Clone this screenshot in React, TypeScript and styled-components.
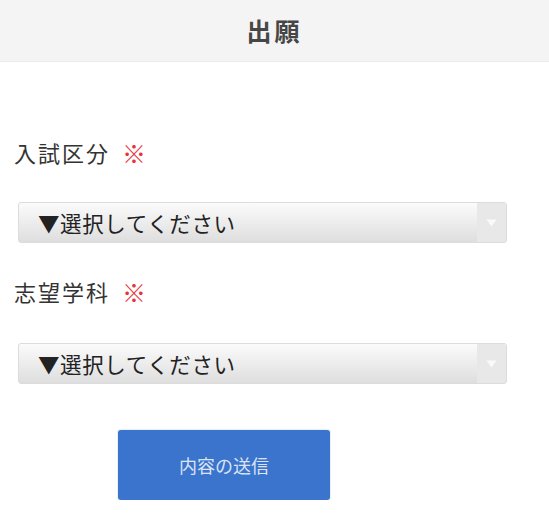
import React from "react";
import styled, { createGlobalStyle } from "styled-components";

const Global = createGlobalStyle`
  html, body { margin: 0; padding: 0; background: #fff; }
  body { font-family: "Noto Sans CJK JP", "Noto Sans", sans-serif; }
`;

const Header = styled.header`
  height: 61px;
  background: #f4f4f4;
  border-bottom: 1px solid #ececec;
  display: flex;
  align-items: center;
  justify-content: center;
`;

const Title = styled.h1`
  margin: 0;
  font-size: 25px;
  font-weight: 700;
  color: #464646;
  letter-spacing: 3px;
  line-height: 1;
`;

const Form = styled.form`
  display: flex;
  flex-direction: column;
  padding: 0 42px 0 14px;
`;

const Label = styled.label<{ $top: number }>`
  margin-top: ${(p) => p.$top}px;
  height: 30px;
  display: flex;
  align-items: center;
  font-size: 22px;
  color: #333;
  letter-spacing: 2px;
`;

const Required = styled.span`
  color: #e8333c;
  margin-left: 12px;
  font-size: 24px;
`;

const SelectWrap = styled.div<{ $top: number }>`
  margin-top: ${(p) => p.$top}px;
  margin-left: 4px;
  height: 41px;
  display: flex;
  border: 1px solid #dcdcdc;
  border-radius: 3px;
  overflow: hidden;
  box-sizing: border-box;
  background: linear-gradient(#fbfbfb, #dedede);
`;

const Select = styled.select`
  flex: 1;
  appearance: none;
  -webkit-appearance: none;
  border: none;
  outline: none;
  background: transparent;
  font-family: "Noto Sans CJK JP", "Noto Sans", sans-serif;
  font-size: 21.5px;
  color: #222;
  padding: 0 0 0 19px;
  letter-spacing: 0.6px;
`;

const ArrowCell = styled.div`
  width: 29px;
  background: #e8e8e8;
  display: flex;
  align-items: center;
  justify-content: center;
`;

const Submit = styled.button`
  margin: 46px 0 0 104px;
  width: 212px;
  height: 70px;
  border: none;
  border-radius: 3px;
  background: #3a74cc;
  color: rgba(255, 255, 255, 0.82);
  font-family: "Noto Sans CJK JP", "Noto Sans", sans-serif;
  font-size: 18px;
  box-shadow: 0 0 2px rgba(58, 116, 204, 0.4);
`;

const Arrow = () => (
  <svg width="11" height="8" viewBox="0 0 11 8">
    <path d="M0.5 0.5 L10.5 0.5 L5.5 7.5 Z" fill="#fafafa" />
  </svg>
);

const Field = ({ label, top, selTop }: { label: string; top: number; selTop: number }) => (
  <>
    <Label $top={top}>
      {label}
      <Required>※</Required>
    </Label>
    <SelectWrap $top={selTop}>
      <Select defaultValue="">
        <option value="">▼選択してください</option>
      </Select>
      <ArrowCell>
        <Arrow />
      </ArrowCell>
    </SelectWrap>
  </>
);

export default function App() {
  return (
    <>
      <Global />
      <Header>
        <Title>出願</Title>
      </Header>
      <Form onSubmit={(e) => e.preventDefault()}>
        <Field label="入試区分" top={75} selTop={35} />
        <Field label="志望学科" top={33} selTop={37} />
        <Submit type="submit">内容の送信</Submit>
      </Form>
    </>
  );
}
